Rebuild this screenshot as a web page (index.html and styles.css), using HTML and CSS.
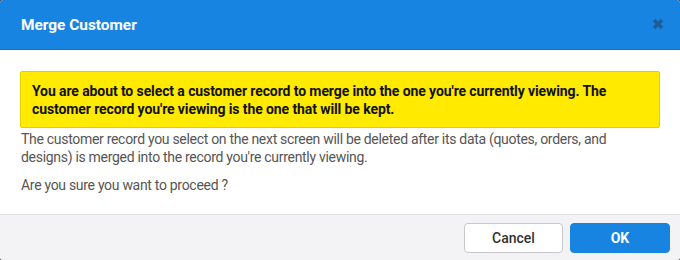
FILE: index.html
```html
<!DOCTYPE html>
<html>
<head>
<meta charset="utf-8">
<link rel="stylesheet" href="styles.css">
</head>
<body>
<div class="dialog">
  <div class="header">
    <span class="title">Merge Customer</span>
    <span class="close" aria-label="Close">
      <svg width="12" height="12" viewBox="0 0 12 12"><path d="M2 2 L10 10 M10 2 L2 10" stroke="#1f5c94" stroke-width="3.4" stroke-linecap="butt"/></svg>
    </span>
  </div>
  <div class="content">
    <div class="warning">You are about to select a customer record to merge into the one you're currently viewing. The customer record you're viewing is the one that will be kept.</div>
    <p class="text first">The customer record you select on the next screen will be deleted after its data (quotes, orders, and designs) is merged into the record you're currently viewing.</p>
    <p class="text">Are you sure you want to proceed ?</p>
  </div>
  <div class="footer">
    <button class="btn cancel">Cancel</button>
    <button class="btn ok">OK</button>
  </div>
</div>
</body>
</html>
```
FILE: styles.css
```css
html, body {
  margin: 0;
  padding: 0;
  background: #3a3a3a;
}
body {
  font-family: Roboto, "Liberation Sans", sans-serif;
  width: 680px;
  height: 260px;
  overflow: hidden;
}
.dialog {
  width: 680px;
  height: 260px;
  background: #ffffff;
  border-radius: 3px;
  overflow: hidden;
  display: flex;
  flex-direction: column;
}
.header {
  height: 50px;
  background: #1784e1;
  border-bottom: 1px solid #1470c4;
  display: flex;
  align-items: center;
  justify-content: space-between;
  padding: 0 16px 0 21px;
  box-sizing: border-box;
  flex: none;
}
.title {
  color: #ffffff;
  font-weight: 700;
  font-size: 15.4px;
}
.close {
  display: flex;
  width: 12px;
  height: 12px;
  margin-top: -1px;
}
.content {
  padding: 21px 20px 0 20px;
  flex: 1;
}
.warning {
  background: #ffea00;
  border: 1px solid #e3cf00;
  border-radius: 2px;
  padding: 10px 10px 9px 11px;
  font-weight: 700;
  font-size: 14px;
  line-height: 18px;
  letter-spacing: -0.1px;
  color: #111111;
}
.text {
  margin: 10px 0 0 1px;
  font-size: 14px;
  line-height: 18px;
  letter-spacing: -0.3px;
  color: #555555;
}
.text.first {
  margin-top: 2px;
}
.footer {
  flex: none;
  height: 46px;
  box-sizing: border-box;
  background: #f3f3f5;
  border-top: 1px solid #e2e2e4;
  display: flex;
  justify-content: flex-end;
  align-items: flex-start;
  gap: 7px;
  padding: 8px 10px 0 0;
}
.btn {
  height: 30px;
  border-radius: 4px;
  font-family: Roboto, "Liberation Sans", sans-serif;
  font-size: 14px;
  font-weight: 500;
  cursor: pointer;
  box-sizing: border-box;
}
.cancel {
  width: 99px;
  background: #ffffff;
  border: 1px solid #c8c8cc;
  color: #333333;
}
.ok {
  width: 100px;
  background: #1784e1;
  border: 1px solid #1784e1;
  color: #ffffff;
  font-weight: 700;
}
```
